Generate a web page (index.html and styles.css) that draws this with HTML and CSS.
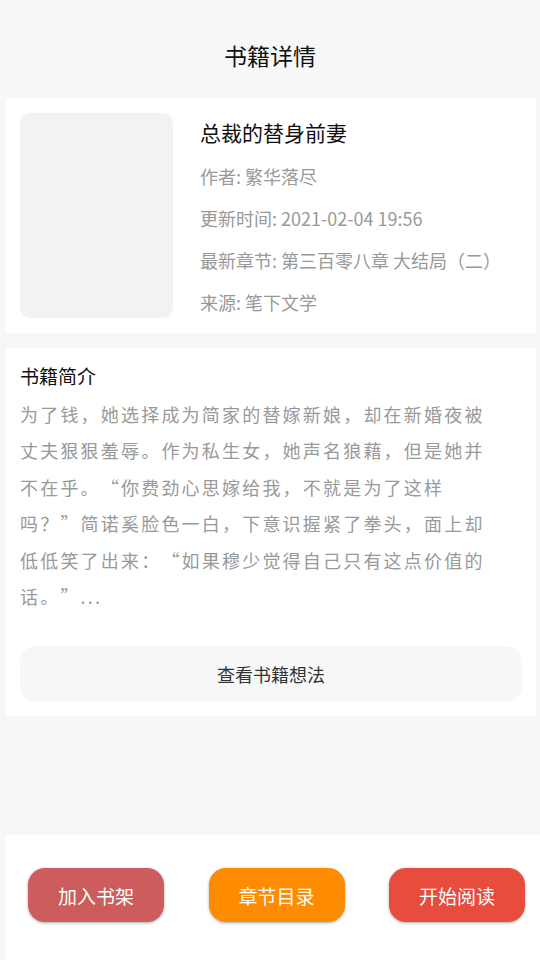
FILE: index.html
```html
<!DOCTYPE html>
<html lang="zh-CN">
<head>
    <meta charset="UTF-8">
    <meta name="viewport" content="width=device-width, initial-scale=1.0">
    <title>书籍详情</title>
    <link rel="stylesheet" href="styles.css">
</head>
<body>

    <div class="header">书籍详情</div>

    <div class="card book-info">
        <div class="cover"></div>
        <div class="meta">
            <div class="book-title">总裁的替身前妻</div>
            <div class="meta-line">作者: 繁华落尽</div>
            <div class="meta-line">更新时间: 2021-02-04 19:56</div>
            <div class="meta-line">最新章节: 第三百零八章 大结局（二）</div>
            <div class="meta-line">来源: 笔下文学</div>
        </div>
    </div>

    <div class="card intro">
        <div class="intro-title">书籍简介</div>
        <div class="intro-text">为了钱，她选择成为简家的替嫁新娘，却在新婚夜被丈夫狠狠羞辱。作为私生女，她声名狼藉，但是她并不在乎。“你费劲心思嫁给我，不就是为了这样吗？”简诺奚脸色一白，下意识握紧了拳头，面上却低低笑了出来：“如果穆少觉得自己只有这点价值的话。”...</div>
        <button class="thoughts-button">查看书籍想法</button>
    </div>

    <div class="footer">
        <button class="action-button shelf">加入书架</button>
        <button class="action-button catalog">章节目录</button>
        <button class="action-button read">开始阅读</button>
    </div>

</body>
</html>
```

FILE: styles.css
```css
        * {
            box-sizing: border-box;
        }

        body {
            font-family: "Noto Sans CJK SC", "Noto Sans", sans-serif;
            background-color: #f7f7f7;
            margin: 0;
            padding: 0;
            min-height: 100vh;
            display: flex;
            flex-direction: column;
            text-spacing-trim: space-all;
        }

        .header {
            padding: 38px 0 26px;
            line-height: 34px;
            font-size: 23px;
            color: #111;
            text-align: center;
        }

        .card {
            background-color: #ffffff;
            margin: 0 4px 0 6px;
        }

        .book-info {
            display: flex;
            padding: 15px 14px;
        }

        .cover {
            width: 153px;
            height: 205px;
            border-radius: 10px;
            background-color: #f2f2f2;
            flex-shrink: 0;
        }

        .meta {
            margin-left: 27px;
            display: flex;
            flex-direction: column;
        }

        .book-title {
            font-size: 21px;
            line-height: 38px;
            color: #111;
            margin-bottom: 13px;
        }

        .meta-line {
            font-size: 18px;
            line-height: 24px;
            color: #999999;
            margin-bottom: 18px;
        }

        .meta-line:last-child {
            margin-bottom: 0;
        }

        .intro {
            margin-top: 15px;
            padding: 14px 14px 14px 14px;
        }

        .intro-title {
            font-size: 19px;
            line-height: 28px;
            color: #111;
        }

        .intro-text {
            margin-top: 6px;
            width: 480px;
            font-size: 18px;
            line-height: 36.4px;
            letter-spacing: 2.2px;
            color: #999999;
        }

        .thoughts-button {
            display: block;
            width: 100%;
            height: 56px;
            margin-top: 32px;
            border: none;
            border-radius: 16px;
            background-color: #f7f7f7;
            color: #333333;
            font-family: inherit;
            font-size: 18px;
        }

        .footer {
            margin-top: auto;
            margin-left: 6px;
            height: 125px;
            background-color: #ffffff;
            display: flex;
            justify-content: space-between;
            align-items: flex-start;
            padding: 33px 15px 0 22px;
        }

        .action-button {
            width: 136px;
            height: 54px;
            border: none;
            border-radius: 17px;
            color: #ffffff;
            font-family: inherit;
            font-size: 19px;
            box-shadow: 0 1px 3px rgba(0, 0, 0, 0.35);
        }

        .shelf {
            background-color: #cd5c5c;
        }

        .catalog {
            background-color: #ff8c00;
        }

        .read {
            background-color: #e74c3c;
        }
```
